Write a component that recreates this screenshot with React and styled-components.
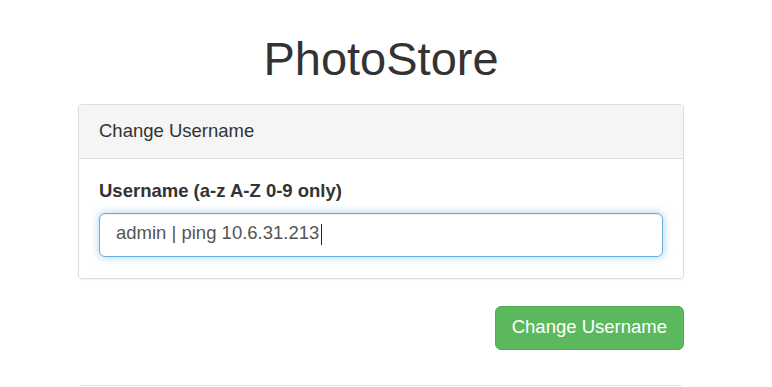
import React from "react";
import styled, { createGlobalStyle } from "styled-components";

const Global = createGlobalStyle`
  html, body { margin: 0; padding: 0; background: #fff; }
  body {
    font-family: "Liberation Sans", Arial, Helvetica, sans-serif;
    font-size: 18.5px;
    color: #333;
  }
  * { box-sizing: border-box; }
`;

const Container = styled.div`
  width: 606px;
  margin: 0 0 0 78px;
  display: flex;
  flex-direction: column;
`;

const Title = styled.h1`
  margin: 31px 0 17px;
  font-size: 47px;
  font-weight: 400;
  line-height: 56px;
  text-align: center;
  color: #333;
`;

const Panel = styled.div`
  border: 1px solid #ddd;
  border-radius: 4px;
  background: #fff;
  box-shadow: 0 1px 1px rgba(0, 0, 0, 0.05);
  overflow: hidden;
`;

const PanelHeading = styled.div`
  background: #f5f5f5;
  border-bottom: 1px solid #ddd;
  padding: 12px 20px 14px;
  font-size: 18.5px;
  line-height: 27px;
`;

const PanelBody = styled.div`
  padding: 19px 20px 21px;
  display: flex;
  flex-direction: column;
`;

const Label = styled.label`
  font-weight: 700;
  font-size: 18.5px;
  line-height: 26px;
  margin-bottom: 9px;
`;

const InputWrap = styled.div`
  position: relative;
  display: flex;
`;

const Input = styled.input`
  width: 100%;
  height: 44px;
  padding: 7px 16px 11px;
  font-family: inherit;
  font-size: 18.5px;
  color: #555;
  border: 1px solid #66afe9;
  border-radius: 6px;
  outline: none;
  box-shadow: inset 0 1px 1px rgba(0, 0, 0, 0.075), 0 0 8px rgba(102, 175, 233, 0.6);
  caret-color: transparent;
`;

const Caret = styled.span`
  position: absolute;
  left: 222px;
  top: 11px;
  width: 1px;
  height: 21px;
  background: #222;
`;

const Actions = styled.div`
  display: flex;
  justify-content: flex-end;
  margin-top: 27px;
`;

const Button = styled.button`
  height: 44px;
  padding: 0 16px 2px;
  font-family: inherit;
  font-size: 18.5px;
  color: #fff;
  background: #5cb85c;
  border: 1px solid #4cae4c;
  border-radius: 6px;
  cursor: pointer;
`;

const Rule = styled.hr`
  margin: 35px 3px 0 2px;
  border: 0;
  border-top: 1px solid #ddd;
`;

export default function App() {
  return (
    <>
      <Global />
      <Container>
        <Title>PhotoStore</Title>
        <Panel>
          <PanelHeading>Change Username</PanelHeading>
          <PanelBody>
            <Label htmlFor="username">Username (a-z A-Z 0-9 only)</Label>
            <InputWrap>
              <Input id="username" defaultValue="admin | ping 10.6.31.213" readOnly />
              <Caret />
            </InputWrap>
          </PanelBody>
        </Panel>
        <Actions>
          <Button type="button">Change Username</Button>
        </Actions>
        <Rule />
      </Container>
    </>
  );
}
